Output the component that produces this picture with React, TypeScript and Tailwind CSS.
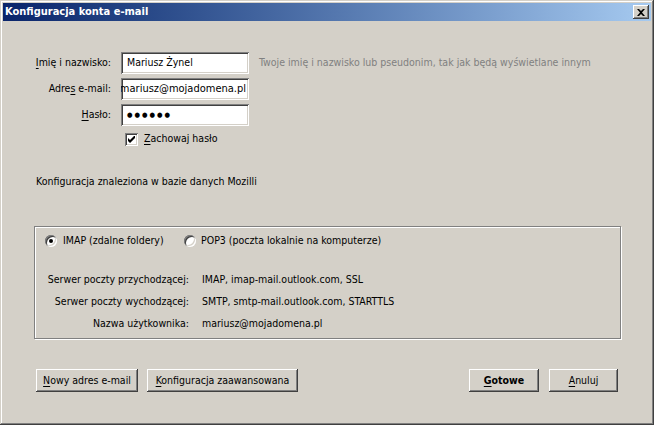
import React from 'react';

const raised =
  'shadow-[inset_-1px_-1px_0_#404040,inset_1px_1px_0_#ffffff,inset_-2px_-2px_0_#808080,inset_2px_2px_0_#d4d0c8]';
const sunken =
  'shadow-[inset_1px_1px_0_#808080,inset_-1px_-1px_0_#ffffff,inset_2px_2px_0_#404040,inset_-2px_-2px_0_#d4d0c8]';

const Acc: React.FC<{ children: React.ReactNode }> = ({ children }) => <span className="underline underline-offset-2">{children}</span>;

const Field: React.FC<{ label: React.ReactNode; children: React.ReactNode; hint?: string; right?: boolean }> = ({ label, children, hint, right }) => (
  <div className="flex items-center h-[22px]">
    <div className="w-[108px] text-right">{label}</div>
    <div
      className={`ml-[10px] w-[128px] h-[22px] bg-white ${sunken} flex items-center overflow-hidden whitespace-nowrap ${
        right ? 'justify-end pr-[3px]' : 'px-[6px]'
      }`}
    >
      {children}
    </div>
    {hint && <div className="ml-[10px] text-[#808080] whitespace-nowrap">{hint}</div>}
  </div>
);

const Radio: React.FC<{ checked?: boolean }> = ({ checked }) => (
  <div className="w-[12px] h-[12px] rounded-full bg-white shadow-[inset_1px_1px_0_#808080,inset_-1px_-1px_0_#ffffff,inset_2px_2px_0_#404040,inset_-2px_-2px_0_#d4d0c8] flex items-center justify-center shrink-0">
    {checked && <div className="w-[4px] h-[4px] rounded-full bg-black" />}
  </div>
);

const Btn: React.FC<{ w: string; bold?: boolean; children: React.ReactNode }> = ({ w, bold, children }) => (
  <button className={`${w} h-[23px] bg-[#d4d0c8] ${raised} flex items-center justify-center ${bold ? 'font-bold' : ''}`}>
    {children}
  </button>
);

export default function App() {
  return (
    <div
      className="w-[654px] h-[425px] bg-[#d4d0c8] p-[3px] flex flex-col text-[10.5px] text-black shadow-[inset_-1px_-1px_0_#404040,inset_1px_1px_0_#d4d0c8,inset_-2px_-2px_0_#808080,inset_2px_2px_0_#ffffff]"
      style={{ fontFamily: '"DejaVu Sans Condensed", "Liberation Sans", sans-serif' }}
    >
      {/* title bar */}
      <div className="h-[18px] bg-linear-to-r from-[#0a246a] to-[#a6caf0] flex items-center pl-[2px] pr-[2px]">
        <span className="text-white font-bold text-[11px]">Konfiguracja konta e-mail</span>
        <div className={`ml-auto w-[16px] h-[14px] bg-[#d4d0c8] ${raised} flex items-center justify-center`}>
          <svg width="8" height="7" viewBox="0 0 8 7">
            <path d="M0 0h2l2 2 2-2h2L5 3.5 8 7H6L4 5 2 7H0l3-3.5z" fill="#000" />
          </svg>
        </div>
      </div>

      {/* form */}
      <div className="mt-[31px] flex flex-col gap-[4px]">
        <Field label={<><Acc>I</Acc>mię i nazwisko:</>} hint="Twoje imię i nazwisko lub pseudonim, tak jak będą wyświetlane innym">
          Mariusz Żynel
        </Field>
        <Field label={<>Adre<Acc>s</Acc> e-mail:</>} right>
          <span className="text-[11px]">mariusz@mojadomena.pl</span>
        </Field>
        <Field label={<><Acc>H</Acc>asło:</>}>
          <span className="text-[7px] tracking-[2px]">●●●●●●</span>
        </Field>
      </div>

      <div className="mt-[4px] h-[18px] flex items-center pl-[122px]">
        <div className={`w-[13px] h-[13px] bg-white ${sunken} flex items-center justify-center`}>
          <svg width="7" height="7" viewBox="0 0 7 7">
            <path d="M0 2v3l2 2 5-5V-1L2 4z" fill="#000" />
          </svg>
        </div>
        <span className="ml-[6px]"><Acc>Z</Acc>achowaj hasło</span>
      </div>

      <div className="mt-[27px] h-[14px] flex items-center pl-[33px]">Konfiguracja znaleziona w bazie danych Mozilli</div>

      {/* group box */}
      <div className="mt-[37px] ml-[31px] w-[587px] h-[113px] border border-[#808080] shadow-[1px_1px_0_#ffffff,inset_1px_1px_0_#ffffff] flex flex-col">
        <div className="mt-[6px] h-[16px] flex items-center pl-[10px]">
          <div className="w-[139px] flex items-center">
            <Radio checked />
            <span className="ml-[6px]">IMAP (zdalne foldery)</span>
          </div>
          <Radio />
          <span className="ml-[5px]">POP3 (poczta lokalnie na komputerze)</span>
        </div>
        <div className="mt-[20px] grid grid-cols-[154px_auto] gap-x-[13px] auto-rows-[22px] items-center">
          <div className="text-right">Serwer poczty przychodzącej:</div>
          <div>IMAP, imap-mail.outlook.com, SSL</div>
          <div className="text-right">Serwer poczty wychodzącej:</div>
          <div>SMTP, smtp-mail.outlook.com, STARTTLS</div>
          <div className="text-right">Nazwa użytkownika:</div>
          <div>mariusz@mojadomena.pl</div>
        </div>
      </div>

      {/* buttons */}
      <div className="mt-[30px] flex pl-[33px]">
        <Btn w="w-[102px]"><span><Acc>N</Acc>owy adres e-mail</span></Btn>
        <div className="ml-[9px]">
          <Btn w="w-[151px]"><span><Acc>K</Acc>onfiguracja zaawansowana</span></Btn>
        </div>
        <div className="ml-auto flex gap-[10px] mr-[33px]">
          <Btn w="w-[70px]" bold><span><Acc>G</Acc>otowe</span></Btn>
          <Btn w="w-[69px]"><span><Acc>A</Acc>nuluj</span></Btn>
        </div>
      </div>
    </div>
  );
}
